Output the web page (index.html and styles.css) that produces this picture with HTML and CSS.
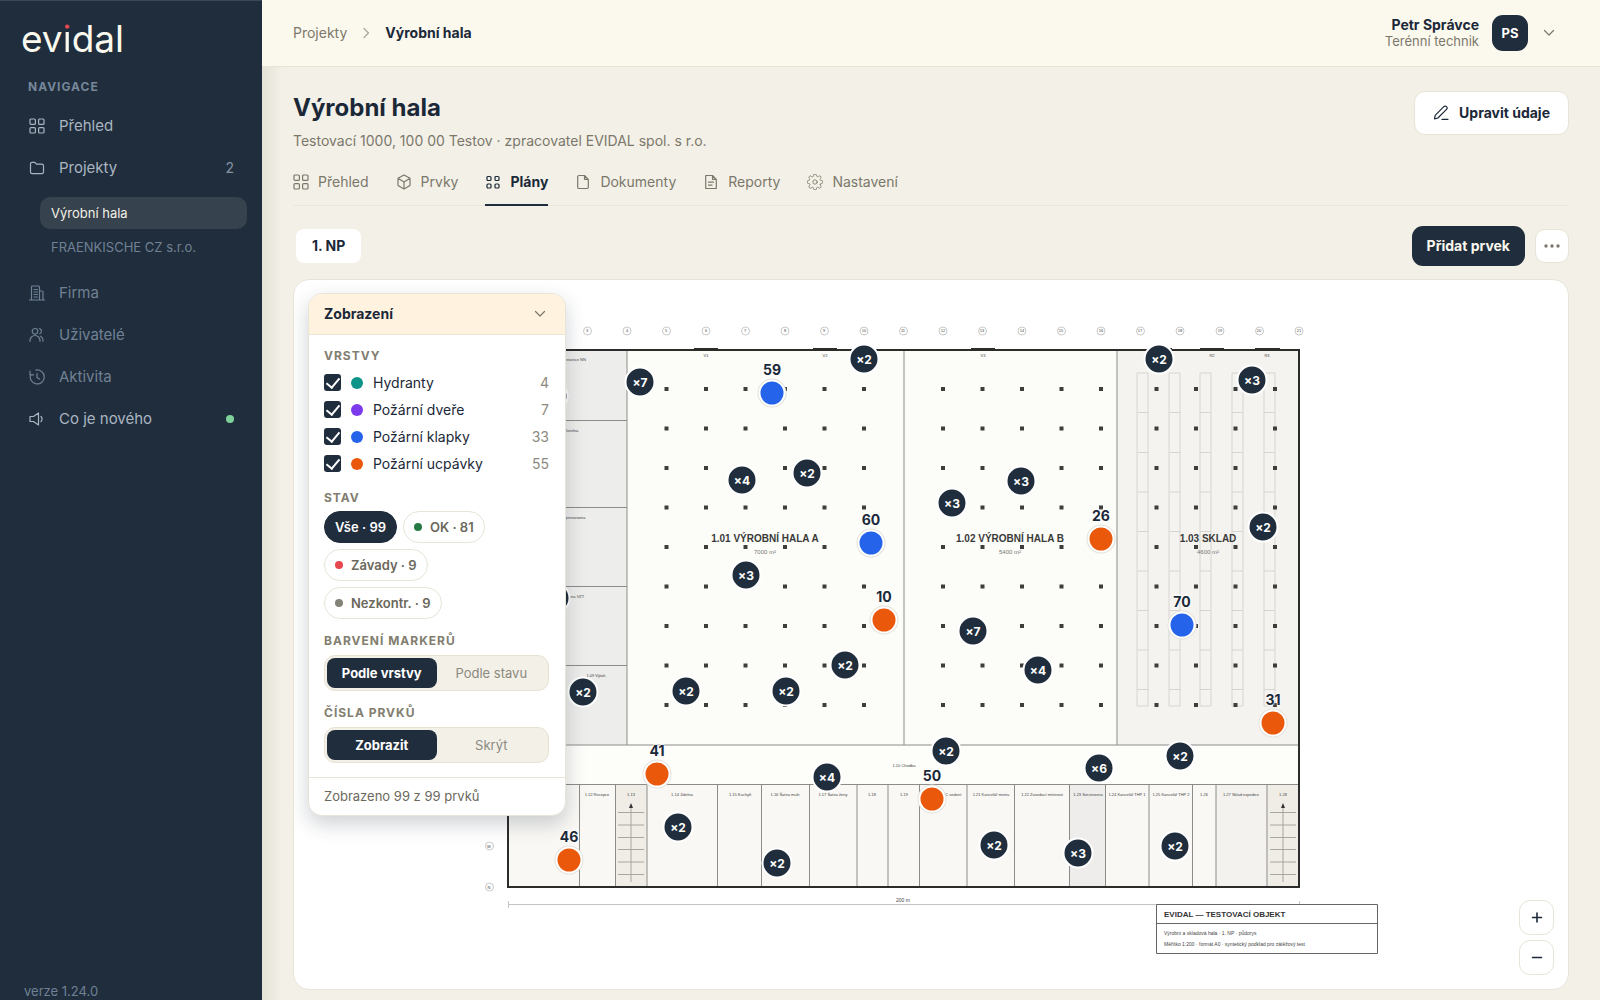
FILE: index.html
```html
<!DOCTYPE html>
<html lang="cs">
<head>
<meta charset="utf-8">
<meta name="viewport" content="width=device-width, initial-scale=1">
<title>Výrobní hala – Plány | evidal</title>
<link rel="stylesheet" href="styles.css">
</head>
<body>
<svg class="defs" aria-hidden="true">
  <symbol id="i-grid" viewBox="0 0 16 16"><rect x="1" y="1" width="5.4" height="5.4" rx="1"/><rect x="9.6" y="1" width="5.4" height="5.4" rx="1"/><rect x="1" y="9.6" width="5.4" height="5.4" rx="1"/><rect x="9.6" y="9.6" width="5.4" height="5.4" rx="1"/></symbol>
  <symbol id="i-folder" viewBox="0 0 16 16"><path d="M1.5 12V4A1.7 1.7 0 0 1 3.2 2.3h2.6L7.5 4.2h5.3A1.7 1.7 0 0 1 14.500 5.900V12a1.700 1.700 0 0 1-1.700 1.700H3.200A1.700 1.700 0 0 1 1.500 12z"/></symbol>
  <symbol id="i-building" viewBox="0 0 16 16"><path d="M.5 15h15M2.500 15V2a1 1 0 0 1 1-1h6a1 1 0 0 1 1 1v13M10.500 6h2.500a1 1 0 0 1 1 1v8M5 4.500h3.500M5 7h3.500M5 9.500h3.500M5 12h3.500"/></symbol>
  <symbol id="i-users" viewBox="0 0 16 16"><circle cx="6" cy="4.300" r="2.800"/><path d="M1 14.500v-1a5 5 0 0 1 10 0v1M10.500 1.600a2.800 2.800 0 0 1 .3 5.200M11.500 9.200a4.500 4.500 0 0 1 2.500 4v1"/></symbol>
  <symbol id="i-history" viewBox="0 0 16 16"><path d="M6.800 1.100A7 7 0 1 1 1.700 5.500M1 2v3.800h3.600M8 4.500V8.400l2.500 1.600"/></symbol>
  <symbol id="i-horn" viewBox="0 0 16 16"><path d="M1 5.500h3.500L9.500 2v12l-5-3.500H1zM12 5.500a3.500 3.500 0 0 1 0 5"/></symbol>
  <symbol id="i-cube" viewBox="0 0 16 16"><path d="M8 1l6 3.300v7.200L8 15l-6-3.500V4.300zM2 4.300L8 8l6-3.700M8 8v7"/></symbol>
  <symbol id="i-plans" viewBox="0 0 16 16"><rect x="2" y="2.500" width="4" height="4" rx="1"/><rect x="10" y="2.500" width="4" height="4" rx="1"/><rect x="2" y="10" width="4" height="4" rx="1"/><rect x="10" y="10" width="4" height="4" rx="1"/></symbol>
  <symbol id="i-file" viewBox="0 0 16 16"><path d="M9.500 1.500H4A1.300 1.300 0 0 0 2.700 2.800v10.400A1.300 1.300 0 0 0 4 14.500h8a1.300 1.300 0 0 0 1.300-1.300V5.300zM9.500 1.500v3.800h3.800"/></symbol>
  <symbol id="i-report" viewBox="0 0 16 16"><path d="M9.500 1.500H2.700v13h10.600V5.300zM9.500 1.500v3.800h3.800M5.500 8.200h5M5.500 11.200h3.500"/></symbol>
  <symbol id="i-gear" viewBox="1 1 22 22"><circle cx="12" cy="12" r="3"/><path d="M19.400 15a1.650 1.650 0 0 0 .33 1.820l.06.06a2 2 0 0 1-2.830 2.830l-.06-.06a1.650 1.650 0 0 0-2.800 1.170V21a2 2 0 0 1-4 0v-.09a1.650 1.650 0 0 0-2.900-1.100l-.06.06a2 2 0 0 1-2.830-2.830l.06-.06A1.650 1.650 0 0 0 3.100 14H3a2 2 0 0 1 0-4h.09a1.650 1.650 0 0 0 1.200-2.800l-.06-.06a2 2 0 0 1 2.830-2.830l.06.06A1.650 1.650 0 0 0 10 3.100V3a2 2 0 0 1 4 0v.09a1.650 1.650 0 0 0 2.800 1.200l.06-.06a2 2 0 0 1 2.830 2.830l-.06.06A1.650 1.650 0 0 0 20.900 10H21a2 2 0 0 1 0 4h-.09a1.650 1.650 0 0 0-1.510 1z" /></symbol>
  <symbol id="i-pen" viewBox="0 0 16 16"><path d="M1.500 13.800l.7-3.500L10.800 1.700a1.900 1.900 0 0 1 2.700 2.700L4.900 13zM9 14.300h6"/></symbol>
  <symbol id="i-down" viewBox="0 0 16 16"><path d="M3.500 5.500l4.500 4.500 4.500-4.500"/></symbol>
  <symbol id="i-right" viewBox="0 0 16 16"><path d="M6 3.500l4.500 4.500-4.500 4.500"/></symbol>
  <symbol id="i-more" viewBox="0 0 16 16"><g class="solid"><circle cx="2" cy="8" r="1.700"/><circle cx="8" cy="8" r="1.700"/><circle cx="14" cy="8" r="1.700"/></g></symbol>
  <symbol id="i-plus" viewBox="0 0 16 16"><path d="M8 3v9M3.500 7.500h9"/></symbol>
  <symbol id="i-minus" viewBox="0 0 16 16"><path d="M3.500 7.500h9"/></symbol>
</svg>

<div class="app">
  <aside class="sidebar">
    <a class="logo" href="#">ev<span class="logo-i">i</span>dal</a>
    <p class="nav-title">NAVIGACE</p>
    <nav class="nav">
      <a class="nav-item" href="#"><svg class="icon"><use href="#i-grid"/></svg>Přehled</a>
      <a class="nav-item" href="#"><svg class="icon"><use href="#i-folder"/></svg>Projekty<span class="nav-count">2</span></a>
      <div class="subnav">
        <a class="subnav-item is-active" href="#">Výrobní hala</a>
        <a class="subnav-item" href="#">FRAENKISCHE CZ s.r.o.</a>
      </div>
      <a class="nav-item is-dim" href="#"><svg class="icon"><use href="#i-building"/></svg>Firma</a>
      <a class="nav-item is-dim" href="#"><svg class="icon"><use href="#i-users"/></svg>Uživatelé</a>
      <a class="nav-item is-dim" href="#"><svg class="icon"><use href="#i-history"/></svg>Aktivita</a>
      <a class="nav-item" href="#"><svg class="icon"><use href="#i-horn"/></svg>Co je nového<span class="nav-dot"></span></a>
    </nav>
    <p class="version">verze 1.24.0</p>
  </aside>

  <div class="main">
    <header class="topbar">
      <nav class="crumbs" aria-label="Drobečková navigace">
        <a href="#">Projekty</a>
        <svg class="icon"><use href="#i-right"/></svg>
        <strong>Výrobní hala</strong>
      </nav>
      <button class="user" type="button">
        <span class="user-text"><strong>Petr Správce</strong><span>Terénní technik</span></span>
        <span class="avatar">PS</span>
        <svg class="icon"><use href="#i-down"/></svg>
      </button>
    </header>

    <main class="content">
      <div class="page-head">
        <div>
          <h1>Výrobní hala</h1>
          <p class="subtitle">Testovací 1000, 100 00 Testov · zpracovatel EVIDAL spol. s r.o.</p>
        </div>
        <button class="btn btn-light" type="button"><svg class="icon"><use href="#i-pen"/></svg>Upravit údaje</button>
      </div>

      <nav class="tabs">
        <a class="tab" href="#"><svg class="icon"><use href="#i-grid"/></svg>Přehled</a>
        <a class="tab" href="#"><svg class="icon"><use href="#i-cube"/></svg>Prvky</a>
        <a class="tab is-active" href="#"><svg class="icon"><use href="#i-plans"/></svg>Plány</a>
        <a class="tab" href="#"><svg class="icon"><use href="#i-file"/></svg>Dokumenty</a>
        <a class="tab" href="#"><svg class="icon"><use href="#i-report"/></svg>Reporty</a>
        <a class="tab" href="#"><svg class="icon"><use href="#i-gear"/></svg>Nastavení</a>
      </nav>

      <div class="toolbar">
        <button class="floor" type="button">1. NP</button>
        <div class="toolbar-actions">
          <button class="btn btn-dark" type="button">Přidat prvek</button>
          <button class="btn-more" type="button" aria-label="Další"><svg class="icon"><use href="#i-more"/></svg></button>
        </div>
      </div>

      <section class="canvas" aria-label="Půdorys">
        <div class="plan">
          <svg class="drawing" viewBox="481 315 900 640">
            <!-- outer walls and halls -->
            <rect x="508" y="350" width="119" height="395" fill="#ededeb"/>
            <rect x="627" y="350" width="490" height="395" fill="#fcfdf8"/>
            <rect x="1117" y="350" width="182" height="395" fill="#f4f3f0"/>
            <rect x="508" y="745" width="791" height="39" fill="#fdfdfa"/>
            <rect x="508" y="784" width="791" height="103" fill="#f9f8f5"/>
            <rect x="615" y="784" width="32" height="103" fill="#f0ede6"/>
            <rect x="1070" y="784" width="36" height="103" fill="#eeedeb"/>
            <rect x="1216" y="784" width="51" height="103" fill="#f3f2ef"/>
            <rect x="1267" y="784" width="32" height="103" fill="#f0ede6"/>
            <g class="walls">
              <path d="M508 420.500H627M508 507.500H627M508 586.500H627M508 665.500H627M508 745H1299M508 784.500H1299"/>
              <path d="M627 350V745M904 350V745M1117 350V745"/>
              <path d="M579.500 784V887M615.500 784V887M647 784V887M717.500 784V887M761.500 784V887M809.500 784V887M857 784V887M888 784V887M919.500 784V887M967 784V887M1014.500 784V887M1069.500 784V887M1105.500 784V887M1149 784V887M1192.500 784V887M1216 784V887M1267 784V887"/>
            </g>
            <!-- storage racks -->
            <g class="racks">
              <path id="rack" d="M1137 373h11v333h-11zM1137 412.500h11M1137 452.500h11M1137 492h11M1137 531.500h11M1137 571h11M1137 610.500h11M1137 650h11M1137 689.500h11"/>
              <use href="#rack" x="32"/><use href="#rack" x="63"/><use href="#rack" x="95"/><use href="#rack" x="127"/>
            </g>
            <!-- pillars: one row per hall, repeated down the grid -->
            <g class="pillars">
              <path id="pillars" d="M664.500 389h4M704 389h4M743.500 389h4M783 389h4M822.500 389h4M862 389h4M941 389h4M980.500 389h4M1020 389h4M1059.500 389h4M1099 389h4M1154.500 389h4M1194 389h4M1233.500 389h4M1273 389h4"/>
              <use href="#pillars" y="39.500"/><use href="#pillars" y="79"/><use href="#pillars" y="118.500"/><use href="#pillars" y="158"/><use href="#pillars" y="197.500"/><use href="#pillars" y="237"/><use href="#pillars" y="276.500"/><use href="#pillars" y="316"/>
            </g>
            <!-- stairs -->
            <g class="stairs">
              <path id="stairs" d="M618 812.500h26M618 825h26M618 837.500h26M618 849.500h26M618 862h26M618 874.500h26M631 882V806"/>
              <use href="#stairs" x="652"/>
            </g>
            <path d="M631 803l-2 5h4zM1283 803l-2 5h4z" fill="#333"/>
            <rect class="outline" x="508" y="350" width="791" height="537"/>
            <path class="gates" d="M694 349.500h24M813 349.500h24M971 349.500h24M1148 349.500h24M1200 349.500h24M1255 349.500h25"/>
            <!-- grid axes -->
            <g class="axes">
              <circle cx="508" cy="331" r="4"/><circle cx="548" cy="331" r="4"/><circle cx="587.500" cy="331" r="4"/><circle cx="627" cy="331" r="4"/><circle cx="666.500" cy="331" r="4"/><circle cx="706" cy="331" r="4"/><circle cx="745.500" cy="331" r="4"/><circle cx="785" cy="331" r="4"/><circle cx="824.500" cy="331" r="4"/><circle cx="864" cy="331" r="4"/><circle cx="903.500" cy="331" r="4"/><circle cx="943" cy="331" r="4"/><circle cx="982.500" cy="331" r="4"/><circle cx="1022" cy="331" r="4"/><circle cx="1061.500" cy="331" r="4"/><circle cx="1101" cy="331" r="4"/><circle cx="1140.500" cy="331" r="4"/><circle cx="1180" cy="331" r="4"/><circle cx="1220" cy="331" r="4"/><circle cx="1259.500" cy="331" r="4"/><circle cx="1299" cy="331" r="4"/>
              <circle cx="489.500" cy="846" r="4"/><circle cx="489.500" cy="887" r="4"/>
            </g>
            <g class="tiny">
              <text x="587" y="332">3</text><text x="627" y="332">4</text><text x="666" y="332">5</text><text x="706" y="332">6</text><text x="745" y="332">7</text><text x="785" y="332">8</text><text x="824" y="332">9</text><text x="864" y="332">10</text><text x="903" y="332">11</text><text x="943" y="332">12</text><text x="982" y="332">13</text><text x="1022" y="332">14</text><text x="1061" y="332">15</text><text x="1101" y="332">16</text><text x="1140" y="332">17</text><text x="1180" y="332">18</text><text x="1220" y="332">19</text><text x="1259" y="332">20</text><text x="1299" y="332">21</text>
              <text x="489" y="848">M</text><text x="489" y="889">N</text>
              <text x="706" y="357">V1</text><text x="825" y="357">V2</text><text x="983" y="357">V3</text><text x="1212" y="357">R2</text><text x="1267" y="357">R3</text>
              <text x="567" y="361">1.04 Trafostanice NN</text><text x="567" y="432">1.05 Kotelna</text><text x="567" y="519">1.06 Kompresorovna</text><text x="567" y="598">1.07 Strojovna VZT</text><text x="596" y="677">1.09 Výtah</text>
              <text x="904" y="767">1.10 Chodba</text>
              <text x="597" y="796">1.12 Recepce</text><text x="631" y="796">1.13</text><text x="682" y="796">1.14 Jídelna</text><text x="740" y="796">1.15 Kuchyň</text><text x="785" y="796">1.16 Šatna muži</text><text x="833" y="796">1.17 Šatna ženy</text><text x="872" y="796">1.18</text><text x="904" y="796">1.19</text><text x="947" y="796">1.20 WC vedení</text><text x="991" y="796">1.21 Kancelář mistrů</text><text x="1042" y="796">1.22 Zasedací místnost</text><text x="1088" y="796">1.23 Serverovna</text><text x="1127" y="796">1.24 Kancelář THP 1</text><text x="1171" y="796">1.25 Kancelář THP 2</text><text x="1204" y="796">1.26</text><text x="1241" y="796">1.27 Sklad expedice</text><text x="1283" y="796">1.28</text>
              <text class="dim-text" x="903" y="902">200 m</text>
            </g>
            <g class="hall">
              <text x="765" y="542">1.01 VÝROBNÍ HALA A</text><text x="1010" y="542">1.02 VÝROBNÍ HALA B</text><text x="1208" y="542">1.03 SKLAD</text>
            </g>
            <g class="area">
              <text x="765" y="554">7000 m²</text><text x="1010" y="554">5400 m²</text><text x="1208" y="554">4600 m²</text>
            </g>
            <!-- dimension line and title block -->
            <path class="dim" d="M508 904.500H1299M508.500 901v7M1299.500 901v7"/>
            <path class="block" d="M1156.500 904.500h221v49h-221zM1156.500 923.500h221"/>
            <text class="block-title" x="1164" y="917">EVIDAL — TESTOVACÍ OBJEKT</text>
            <text class="block-text" x="1164" y="935">Výrobní a skladová hala · 1. NP · půdorys</text>
            <text class="block-text" x="1164" y="946">Měřítko 1:200 · formát A0 · syntetický podklad pro zátěžový test</text>
          </svg>

          <button class="cluster" type="button" style="left:72px;top:81px">×2</button>
          <button class="cluster" type="button" style="left:74px;top:283px">×2</button>
          <button class="cluster" type="button" style="left:159px;top:67px">×7</button>
          <button class="cluster" type="button" style="left:383px;top:44px">×2</button>
          <button class="cluster" type="button" style="left:261px;top:165px">×4</button>
          <button class="cluster" type="button" style="left:326px;top:158px">×2</button>
          <button class="cluster" type="button" style="left:265px;top:260px">×3</button>
          <button class="cluster" type="button" style="left:471px;top:188px">×3</button>
          <button class="cluster" type="button" style="left:540px;top:166px">×3</button>
          <button class="cluster" type="button" style="left:678px;top:44px">×2</button>
          <button class="cluster" type="button" style="left:771px;top:65px">×3</button>
          <button class="cluster" type="button" style="left:782px;top:212px">×2</button>
          <button class="cluster" type="button" style="left:492px;top:316px">×7</button>
          <button class="cluster" type="button" style="left:557px;top:355px">×4</button>
          <button class="cluster" type="button" style="left:364px;top:350px">×2</button>
          <button class="cluster" type="button" style="left:305px;top:376px">×2</button>
          <button class="cluster" type="button" style="left:205px;top:376px">×2</button>
          <button class="cluster" type="button" style="left:102px;top:377px">×2</button>
          <button class="cluster" type="button" style="left:465px;top:436px">×2</button>
          <button class="cluster" type="button" style="left:346px;top:462px">×4</button>
          <button class="cluster" type="button" style="left:618px;top:453px">×6</button>
          <button class="cluster" type="button" style="left:699px;top:441px">×2</button>
          <button class="cluster" type="button" style="left:197px;top:512px">×2</button>
          <button class="cluster" type="button" style="left:296px;top:548px">×2</button>
          <button class="cluster" type="button" style="left:513px;top:530px">×2</button>
          <button class="cluster" type="button" style="left:597px;top:538px">×3</button>
          <button class="cluster" type="button" style="left:694px;top:531px">×2</button>

          <button class="pin is-blue" type="button" style="left:291px;top:78px"><span>59</span></button>
          <button class="pin is-blue" type="button" style="left:390px;top:228px"><span>60</span></button>
          <button class="pin is-orange" type="button" style="left:403px;top:305px"><span>10</span></button>
          <button class="pin is-orange" type="button" style="left:620px;top:224px"><span>26</span></button>
          <button class="pin is-blue" type="button" style="left:701px;top:310px"><span>70</span></button>
          <button class="pin is-orange" type="button" style="left:792px;top:408px"><span>31</span></button>
          <button class="pin is-orange" type="button" style="left:176px;top:459px"><span>41</span></button>
          <button class="pin is-orange" type="button" style="left:451px;top:484px"><span>50</span></button>
          <button class="pin is-orange" type="button" style="left:88px;top:545px"><span>46</span></button>
        </div>

        <div class="view-panel">
          <button class="view-head" type="button">Zobrazení<svg class="icon"><use href="#i-down"/></svg></button>
          <div class="view-body">
            <h2>VRSTVY</h2>
            <div class="layers">
              <label class="layer"><input type="checkbox" checked><i class="dot is-teal"></i>Hydranty<span>4</span></label>
              <label class="layer"><input type="checkbox" checked><i class="dot is-violet"></i>Požární dveře<span>7</span></label>
              <label class="layer"><input type="checkbox" checked><i class="dot is-blue"></i>Požární klapky<span>33</span></label>
              <label class="layer"><input type="checkbox" checked><i class="dot is-orange"></i>Požární ucpávky<span>55</span></label>
            </div>
            <h2>STAV</h2>
            <div class="chips">
              <button class="chip is-active" type="button">Vše · 99</button>
              <button class="chip" type="button"><i class="dot is-green"></i>OK · 81</button>
              <button class="chip" type="button"><i class="dot is-red"></i>Závady · 9</button>
              <button class="chip" type="button"><i class="dot is-gray"></i>Nezkontr. · 9</button>
            </div>
            <h2>BARVENÍ MARKERŮ</h2>
            <div class="segment">
              <button class="is-active" type="button">Podle vrstvy</button>
              <button type="button">Podle stavu</button>
            </div>
            <h2>ČÍSLA PRVKŮ</h2>
            <div class="segment">
              <button class="is-active" type="button">Zobrazit</button>
              <button type="button">Skrýt</button>
            </div>
          </div>
          <p class="view-foot">Zobrazeno 99 z 99 prvků</p>
        </div>

        <div class="zoom">
          <button type="button" aria-label="Přiblížit"><svg class="icon"><use href="#i-plus"/></svg></button>
          <button type="button" aria-label="Oddálit"><svg class="icon"><use href="#i-minus"/></svg></button>
        </div>
      </section>
    </main>
  </div>
</div>
</body>
</html>
```
FILE: styles.css
```css
:root {
  --navy: #1f2d3c;
  --ink: #1b2838;
  --muted: #7b786b;
  --line: #e8e4d8;
  --paper: #f3f0e7;
  --cream: #fbf8ee;
  --blue: #2563eb;
  --orange: #ea580c;
}

* { box-sizing: border-box; }

body {
  margin: 0;
  background: var(--paper);
  color: var(--ink);
  font: 400 14px/20px Inter, "Noto Sans", sans-serif;
}

h1, h2, p { margin: 0; }
a { color: inherit; text-decoration: none; }
button { font: inherit; color: inherit; border: 0; padding: 0; background: none; cursor: pointer; }
.defs { position: absolute; width: 0; height: 0; }

.icon {
  flex: none;
  width: 16px;
  height: 16px;
  fill: none;
  stroke: currentColor;
  stroke-width: 1.2;
  stroke-linecap: round;
  stroke-linejoin: round;
}
.solid { fill: currentColor; stroke: none; }

.app { display: grid; grid-template-columns: 262px minmax(0, 1fr); min-height: 100vh; }

/* Sidebar */
.sidebar {
  display: flex;
  flex-direction: column;
  padding: 14px 15px 0;
  background: var(--navy);
  border-top: 1px solid #3b4855;
  color: #aab5c1;
}
.logo {
  padding-left: 6px;
  color: var(--cream);
  font-size: 37px;
  font-weight: 400;
  line-height: 48px;
}
.logo-i {
  background: linear-gradient(#e5484d 16px, var(--cream) 16px);
  background-clip: text;
  -webkit-background-clip: text;
  color: transparent;
}
.nav-title {
  padding: 15px 13px 0;
  color: #76879a;
  font-size: 12px;
  line-height: 18px;
  font-weight: 700;
  letter-spacing: 1px;
}
.nav { display: flex; flex-direction: column; gap: 2px; padding-top: 10px; }
.nav-item {
  display: flex;
  align-items: center;
  gap: 14px;
  height: 40px;
  padding: 0 13px 0 14px;
  font-size: 15px;
}
.nav-item.is-dim { color: #718195; }
.nav-count { margin-left: auto; color: #8794a3; font-size: 14px; }
.nav-dot { margin-left: auto; width: 8px; height: 8px; border-radius: 50%; background: #7fd19b; }
.subnav { display: flex; flex-direction: column; gap: 2px; padding: 7px 0 8px 25px; font-size: 13px; }
.subnav-item { padding: 0 11px; border-radius: 10px; line-height: 32px; color: #718195; }
.subnav-item.is-active { background: #36424d; color: #f3f0e7; }
.version { margin-top: auto; padding-left: 9px; color: #718195; font-size: 13px; line-height: 18px; }

/* Top bar */
.main { display: flex; flex-direction: column; min-width: 0; }
.topbar {
  display: flex;
  align-items: center;
  justify-content: space-between;
  height: 67px;
  padding: 0 43px 0 31px;
  background: var(--cream);
  border-bottom: 1px solid var(--line);
}
.crumbs { display: flex; align-items: center; gap: 11px; color: var(--muted); }
.crumbs strong { color: var(--ink); }
.crumbs .icon { color: #aaa79a; }
.user { display: flex; align-items: center; gap: 13px; text-align: right; }
.user-text { display: flex; flex-direction: column; font-size: 14px; line-height: 17px; }
.user-text strong { font-weight: 700; }
.user-text span { color: var(--muted); font-size: 13px; }
.avatar {
  width: 36px;
  border-radius: 11px;
  background: var(--navy);
  color: #fff;
  font-weight: 700;
  font-size: 13px;
  line-height: 36px;
  text-align: center;
}
.user .icon { color: var(--muted); }

/* Page */
.content {
  flex: 1;
  display: flex;
  flex-direction: column;
  padding: 24px 31px 10px;
  background: linear-gradient(90deg, #e4e1d7, var(--paper) 20px);
}
.page-head { display: flex; justify-content: space-between; align-items: flex-start; }
h1 { font-size: 24px; line-height: 34px; font-weight: 700; }
.subtitle { padding-top: 6px; color: var(--muted); font-size: 14px; line-height: 20px; }
.btn {
  display: flex;
  align-items: center;
  gap: 10px;
  border-radius: 11px;
  font-size: 14px;
  font-weight: 700;
}
.btn-light { height: 44px; padding: 0 18px; background: #fff; border: 1px solid var(--line); }
.btn-dark { height: 40px; padding: 0 15px; background: var(--navy); color: var(--cream); }

.tabs { display: flex; gap: 27px; margin-top: 11px; border-bottom: 1px solid #ebe7dc; color: var(--muted); }
.tab {
  display: flex;
  align-items: center;
  gap: 9px;
  height: 44px;
  margin-bottom: -1px;
  padding-bottom: 3px;
  border-bottom: 2px solid transparent;
}
.tab.is-active { color: var(--ink); font-weight: 700; border-color: var(--navy); }

.toolbar { display: flex; justify-content: space-between; align-items: center; padding: 20px 0 13px; }
.toolbar-actions { display: flex; align-items: center; gap: 10px; }
.floor { height: 34px; margin-left: 3px; padding: 0 16px; border-radius: 8px; background: #fff; font-weight: 700; }
.btn-more {
  display: grid;
  place-items: center;
  width: 34px;
  height: 34px;
  border: 1px solid var(--line);
  border-radius: 10px;
  background: #fff;
  color: var(--muted);
}

/* Plan canvas */
.canvas {
  flex: 1;
  position: relative;
  display: grid;
  place-items: center;
  min-height: 560px;
  overflow: hidden;
  border: 1px solid var(--line);
  border-radius: 16px;
  background: #fff;
}
.plan { position: relative; width: 900px; height: 640px; }
.drawing { display: block; width: 900px; height: 640px; font-family: "Liberation Sans", sans-serif; }
.walls { fill: none; stroke: #8c8c8a; }
.racks { fill: none; stroke: #d6d5d1; }
.pillars { stroke: #3d3d3b; stroke-width: 4; }
.stairs { fill: none; stroke: #a8a6a0; }
.outline { fill: none; stroke: #2c2c2a; stroke-width: 2; }
.gates { stroke: #2c2c2a; stroke-width: 3; }
.axes { fill: #fff; stroke: #c9c9c9; }
.tiny { fill: #444; font-size: 4px; text-anchor: middle; }
.dim-text { font-size: 5px; }
.hall { fill: #3a3a38; font-size: 10px; font-weight: 700; text-anchor: middle; }
.area { fill: #777; font-size: 6px; text-anchor: middle; }
.dim { fill: none; stroke: #c4c4c4; }
.block { fill: #fff; stroke: #666; }
.block-title { fill: #333; font-size: 8px; font-weight: 700; }
.block-text { fill: #444; font-size: 5px; }

.cluster, .pin { position: absolute; transform: translate(-50%, -50%); border-radius: 50%; }
.cluster {
  width: 31px;
  height: 31px;
  border: 2px solid #fff;
  background: var(--navy);
  color: #fff;
  font-size: 12px;
  font-weight: 700;
  line-height: 25px;
  text-align: center;
}
.pin { width: 27px; height: 27px; border: 2px solid #fff; box-shadow: 0 0 0 1px #e4e2dc; }
.pin span {
  position: absolute;
  left: 50%;
  bottom: 27px;
  transform: translateX(-50%);
  font-size: 14px;
  font-weight: 700;
  line-height: 16px;
  text-shadow: 0 0 2px #fff, 0 1px 2px #fff, 0 -1px 2px #fff;
}
.is-blue { background: var(--blue); }
.is-orange { background: var(--orange); }
.is-teal { background: #0d9488; }
.is-violet { background: #7c3aed; }
.is-green { background: #287a45; }
.is-red { background: #e5484d; }
.is-gray { background: #858277; }

/* View options */
.view-panel {
  position: absolute;
  top: 13px;
  left: 14px;
  width: 258px;
  overflow: hidden;
  border: 1px solid var(--line);
  border-radius: 14px;
  background: #fff;
  box-shadow: 0 8px 20px rgba(31, 45, 60, .22);
}
.view-head {
  display: flex;
  align-items: center;
  justify-content: space-between;
  width: 100%;
  height: 41px;
  padding: 0 17px 0 15px;
  border-bottom: 1px solid #ece4d3;
  background: #fff3e0;
  font-weight: 700;
}
.view-head .icon { color: var(--muted); }
.view-body { padding: 12px 16px 14px 15px; }
.view-body h2 {
  color: #827e70;
  font-size: 12px;
  font-weight: 700;
  line-height: 18px;
  letter-spacing: 1px;
}
.layers { padding: 4px 0 12px; }
.layer { display: flex; align-items: center; height: 27px; font-size: 14px; }
.layer span { margin-left: auto; color: #8c8a80; }
.layer input {
  appearance: none;
  width: 17px;
  height: 17px;
  margin: 0 10px 0 0;
  border-radius: 3px;
  background: var(--navy);
  display: grid;
  place-items: center;
}
.layer input:checked::before {
  content: "";
  width: 6px;
  height: 11px;
  margin-bottom: 3px;
  border: solid #fff;
  border-width: 0 2px 2px 0;
  transform: rotate(40deg);
}
.dot { flex: none; width: 8px; height: 8px; border-radius: 50%; }
.layer .dot { width: 12px; height: 12px; margin-right: 10px; }
.chips { display: flex; flex-wrap: wrap; gap: 6px; padding: 4px 0 13px; }
.chip {
  display: flex;
  align-items: center;
  gap: 8px;
  height: 32px;
  padding: 0 10px;
  border: 1px solid var(--line);
  border-radius: 16px;
  color: #6b685c;
  font-size: 13px;
  font-weight: 600;
}
.chip.is-active { background: var(--navy); border-color: var(--navy); color: #fff; }
.segment {
  display: grid;
  grid-template-columns: 1fr 1fr;
  height: 36px;
  margin: 5px 0 13px;
  padding: 2px;
  border: 1px solid #e8e2d2;
  border-radius: 11px;
  background: var(--paper);
}
.segment:last-child { margin-bottom: 0; }
.segment button { border-radius: 8px; color: #8c8a80; font-size: 13px; }
.segment .is-active { background: var(--navy); color: #fff; font-weight: 700; }
.view-foot { padding: 9px 15px; border-top: 1px solid var(--line); color: #6b685c; font-size: 13px; line-height: 19px; }

.zoom { position: absolute; right: 14px; bottom: 14px; display: flex; flex-direction: column; gap: 5px; }
.zoom button {
  display: grid;
  place-items: center;
  width: 35px;
  height: 35px;
  border: 1px solid var(--line);
  border-radius: 11px;
  background: #fff;
}
.zoom .icon { stroke-width: 1.6; }
```
